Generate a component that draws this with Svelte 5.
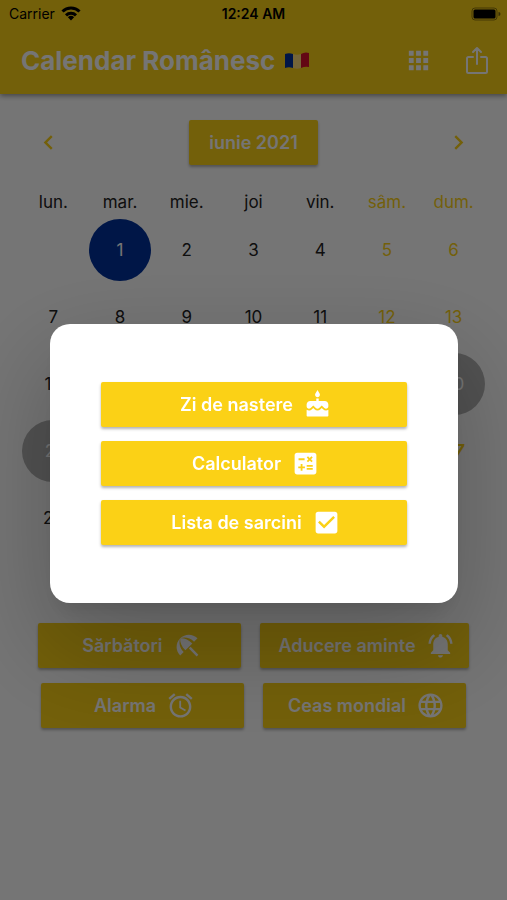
<script>
  const weekdays = ['lun.', 'mar.', 'mie.', 'joi', 'vin.', 'sâm.', 'dum.'];
  const days = [null, ...Array.from({ length: 30 }, (_, i) => i + 1)];
  const muted = [20, 21];

  const icons = {
    cake: 'M12 6c1.11 0 2-.9 2-2 0-.38-.1-.73-.29-1.03L12 0l-1.71 2.97c-.19.3-.29.65-.29 1.03 0 1.1.9 2 2 2zm4.6 9.99l-1.07-1.07-1.08 1.07c-1.3 1.3-3.58 1.31-4.89 0l-1.07-1.07-1.09 1.07C6.75 16.64 5.88 17 4.96 17c-.73 0-1.4-.23-1.96-.61V21c0 .55.45 1 1 1h16c.55 0 1-.45 1-1v-4.61c-.56.38-1.23.61-1.96.61-.92 0-1.79-.36-2.44-1.01zM18 9h-5V7h-2v2H6c-1.66 0-3 1.34-3 3v1.54c0 1.08.88 1.96 1.96 1.96.52 0 1.02-.2 1.38-.57l2.14-2.13 2.13 2.13c.74.74 2.03.74 2.77 0l2.14-2.13 2.13 2.13c.37.37.86.57 1.38.57 1.08 0 1.96-.88 1.96-1.96V12C21 10.34 19.66 9 18 9z',
    calculate: 'M19 3H5c-1.1 0-2 .9-2 2v14c0 1.1.9 2 2 2h14c1.1 0 2-.9 2-2V5c0-1.1-.9-2-2-2zm-5.97 4.06L14.09 6l1.41 1.41L16.91 6l1.06 1.06-1.41 1.41 1.41 1.41-1.06 1.06-1.41-1.4-1.41 1.41-1.06-1.06 1.41-1.41-1.41-1.42zm-6.78.66h5v1.5h-5v-1.5zM11.5 16h-2v2H8v-2H6v-1.5h2v-2h1.5v2h2V16zm6.5 1.25h-5v-1.5h5v1.5zm0-2.5h-5v-1.5h5v1.5z',
    check: 'M19 3H5c-1.11 0-2 .9-2 2v14c0 1.1.89 2 2 2h14c1.11 0 2-.9 2-2V5c0-1.1-.89-2-2-2zm-9 14l-5-5 1.41-1.41L10 14.17l7.59-7.59L19 8l-9 9z',
    umbrella: 'M13.127 14.56l1.43-1.43 6.44 6.443L19.57 21zm4.293-5.73l2.86-2.86c-3.95-3.95-10.35-3.96-14.3-.02 3.93-1.3 8.31-.25 11.44 2.88zM5.95 5.98c-3.94 3.95-3.93 10.35.02 14.3l2.86-2.86C5.7 14.29 4.65 9.91 5.95 5.98zm.02-.02l-.01.01c-.38 3.01 1.17 6.88 4.3 10.02l5.73-5.73c-3.13-3.13-7.01-4.68-10.02-4.3z',
    bell: 'M7.58 4.08L6.15 2.65C3.75 4.48 2.17 7.3 2.03 10.5h2c.15-2.65 1.51-4.97 3.55-6.42zm12.39 6.42h2c-.15-3.2-1.73-6.02-4.12-7.85l-1.42 1.43c2.02 1.45 3.39 3.77 3.54 6.42zM18 11c0-3.07-1.64-5.64-4.5-6.32V4c0-.83-.67-1.5-1.5-1.5s-1.5.67-1.5 1.5v.68C7.63 5.36 6 7.92 6 11v5l-2 2v1h16v-1l-2-2v-5zm-6 11c.14 0 .27-.01.4-.04.65-.14 1.18-.58 1.44-1.18.1-.24.15-.5.15-.78h-4c.01 1.1.9 2 2.01 2z',
    alarm: 'M22 5.72l-4.6-3.86-1.29 1.53 4.6 3.86L22 5.72zM7.88 3.39L6.6 1.86 2 5.71l1.29 1.53 4.59-3.85zM12.5 8H11v6l4.75 2.85.75-1.23-4-2.37V8zM12 4c-4.97 0-9 4.03-9 9s4.02 9 9 9c4.97 0 9-4.03 9-9s-4.03-9-9-9zm0 16c-3.87 0-7-3.13-7-7s3.13-7 7-7 7 3.13 7 7-3.13 7-7 7z',
    globe: 'M11.99 2C6.47 2 2 6.48 2 12s4.47 10 9.99 10C17.52 22 22 17.52 22 12S17.52 2 11.99 2zm6.93 6h-2.95c-.32-1.25-.78-2.45-1.38-3.56 1.84.63 3.37 1.91 4.33 3.56zM12 4.04c.83 1.2 1.48 2.53 1.91 3.96h-3.82c.43-1.43 1.08-2.76 1.91-3.96zM4.26 14C4.1 13.36 4 12.69 4 12s.1-1.36.26-2h3.38c-.08.66-.14 1.32-.14 2s.06 1.34.14 2H4.26zm.82 2h2.95c.32 1.25.78 2.45 1.38 3.56-1.84-.63-3.37-1.9-4.33-3.56zm2.95-8H5.08c.96-1.66 2.49-2.93 4.33-3.56C8.81 5.55 8.35 6.75 8.03 8zM12 19.96c-.83-1.2-1.48-2.53-1.91-3.96h3.82c-.43 1.43-1.08 2.76-1.91 3.96zM14.34 14H9.66c-.09-.66-.16-1.32-.16-2s.07-1.35.16-2h4.68c.09.65.16 1.32.16 2s-.07 1.34-.16 2zm.25 5.56c.6-1.11 1.06-2.31 1.38-3.56h2.95c-.96 1.65-2.49 2.93-4.33 3.56zM16.36 14c.08-.66.14-1.32.14-2s-.06-1.34-.14-2h3.38c.16.64.26 1.31.26 2s-.1 1.36-.26 2h-3.38z',
    left: 'M15.41 7.41L14 6l-6 6 6 6 1.41-1.41L10.83 12z',
    right: 'M10 6L8.59 7.41 13.17 12l-4.58 4.59L10 18l6-6z',
    apps: 'M4 8h4V4H4v4zm6 12h4v-4h-4v4zm-6 0h4v-4H4v4zm0-6h4v-4H4v4zm6 0h4v-4h-4v4zm6-10v4h4V4h-4zm-6 4h4V4h-4v4zm6 6h4v-4h-4v4zm0 6h4v-4h-4v4z'
  };

  const tools = [
    [['Sărbători', 'umbrella'], ['Aducere aminte', 'bell']],
    [['Alarma', 'alarm'], ['Ceas mondial', 'globe']]
  ];
  const dialogActions = [['Zi de nastere', 'cake'], ['Calculator', 'calculate'], ['Lista de sarcini', 'check']];
</script>

{#snippet icon(name)}
  <svg class="icon" viewBox="0 0 24 24" aria-hidden="true"><path d={icons[name]} /></svg>
{/snippet}

<div class="page">
  <header>
    <div class="status">
      <span class="carrier">
        Carrier
        <svg width="20" height="15" viewBox="0 0 20 15" aria-hidden="true">
          <g fill="none" stroke="#000" stroke-width="3">
            <path d="M1.5 5.5a12 12 0 0 1 17 0" />
            <path d="M5 9.3a7.2 7.2 0 0 1 10 0" />
          </g>
          <path d="M6.9 11.2a4.5 4.5 0 0 1 6.2 0L10 14.6z" />
        </svg>
      </span>
      <span class="time">12:24 AM</span>
      <svg class="battery" width="30" height="14" viewBox="0 0 30 14" aria-hidden="true">
        <rect x="1" y="1" width="25" height="12" rx="3" fill="none" stroke="#000" stroke-opacity=".4" />
        <rect x="2.5" y="2.5" width="22" height="9" rx="1.5" />
        <path d="M27.5 5v4a2 2 0 0 0 0-4z" fill-opacity=".5" />
      </svg>
    </div>
    <div class="appbar">
      <h1>
        Calendar Românesc
        <svg width="24" height="18" viewBox="0 0 24 18" role="img" aria-label="România">
          <path fill="#00319c" d="M0 2q4-1.5 8 0v14q-4-1.5-8 0z" />
          <path fill="#ffde7a" d="M8 2q4 1.5 8 0v14q-4 1.5-8 0z" />
          <path fill="#d8102c" d="M16 2q4-2.5 8-1v14q-4-1-8 1z" />
        </svg>
      </h1>
      <button class="plain" aria-label="Aplicații">{@render icon('apps')}</button>
      <button class="plain share" aria-label="Distribuie">
        <svg width="24" height="30" viewBox="0 0 24 30" fill="none" stroke="#fff" stroke-width="2" stroke-linejoin="round" stroke-linecap="round" aria-hidden="true">
          <path d="M8 11H3.5Q2 11 2 12.5v13Q2 27 3.5 27h17q1.5 0 1.5-1.5v-13Q22 11 20.5 11H16M12 18V2M8 6l4-4 4 4" />
        </svg>
      </button>
    </div>
  </header>

  <main>
    <div class="month">
      <button class="plain" aria-label="Luna anterioară">{@render icon('left')}</button>
      <button class="action">iunie 2021</button>
      <button class="plain" aria-label="Luna următoare">{@render icon('right')}</button>
    </div>

    <div class="grid weekdays">
      {#each weekdays as name, i}
        <span class:weekend={i > 4}>{name}</span>
      {/each}
    </div>
    <div class="grid days">
      {#each days as day, i}
        <span
          class:weekend={i % 7 > 4}
          class:selected={day === 1}
          class:muted={muted.includes(day)}
          class:special={day === 27}>{day ?? ''}</span>
      {/each}
    </div>

    <div class="tools">
      {#each tools as row}
        <div class="tool-row">
          {#each row as [label, name]}
            <button class="action with-icon">{label}{@render icon(name)}</button>
          {/each}
        </div>
      {/each}
    </div>
  </main>
</div>

<div class="overlay">
  <div class="dialog" role="dialog" aria-modal="true" aria-label="Instrumente">
    {#each dialogActions as [label, name]}
      <button class="action with-icon">{label}{@render icon(name)}</button>
    {/each}
  </div>
</div>

<style>
  :global(body) {
    margin: 0;
  }
  .page,
  .overlay {
    font-family: Inter, 'Liberation Sans', sans-serif;
    box-sizing: border-box;
  }
  .page {
    min-height: 100vh;
    background: #fff;
    color: #000;
  }
  button {
    font: inherit;
    border: 0;
    cursor: pointer;
  }
  svg {
    display: block;
    flex: none;
  }
  .icon {
    width: 29px;
    height: 29px;
    fill: currentColor;
  }
  header {
    background: #fbd116;
    box-shadow: 0 2px 5px rgba(0, 0, 0, 0.4);
  }
  .status {
    display: grid;
    grid-template-columns: 1fr auto 1fr;
    align-items: center;
    height: 27px;
    padding: 0 6px;
    font-size: 14px;
  }
  .carrier {
    display: flex;
    align-items: center;
    gap: 6px;
    padding-left: 3px;
  }
  .time {
    font-weight: 600;
  }
  .battery {
    justify-self: end;
  }
  .appbar {
    display: flex;
    align-items: center;
    height: 67px;
    padding: 0 18px 0 21px;
    color: #fff;
  }
  h1 {
    display: flex;
    align-items: center;
    gap: 10px;
    flex: 1;
    margin: 0;
    font-size: 26px;
    font-weight: 700;
    white-space: nowrap;
  }
  .plain {
    display: flex;
    padding: 0;
    background: none;
    color: inherit;
  }
  .share {
    margin-left: 32px;
  }
  .action {
    display: flex;
    align-items: center;
    justify-content: center;
    gap: 10px;
    height: 45px;
    padding: 0 20px;
    border-radius: 2px;
    background: #fbd116;
    color: #fff;
    font-size: 18px;
    font-weight: 600;
    white-space: nowrap;
    box-shadow: 0 2px 3px rgba(0, 0, 0, 0.3);
  }
  .with-icon {
    padding: 0 14px 0 18px;
  }
  main {
    padding: 26px 20px;
  }
  .month {
    display: flex;
    align-items: center;
    justify-content: space-between;
    padding: 0 14px;
    color: #fbd116;
  }
  .grid {
    display: grid;
    grid-template-columns: repeat(7, 1fr);
    justify-items: center;
    font-size: 17px;
    color: #222;
  }
  .weekdays {
    margin-top: 26px;
    line-height: 22px;
  }
  .days {
    margin-top: 6px;
    row-gap: 5px;
  }
  .days span {
    width: 62px;
    line-height: 62px;
    border-radius: 50%;
    text-align: center;
  }
  .weekend {
    color: #fbd116;
  }
  .days .selected {
    background: #00319c;
    color: #fff;
  }
  .days .muted {
    background: #b3b3b3;
    color: #fff;
  }
  .days .special {
    font-weight: 700;
    font-style: italic;
  }
  .tools {
    display: grid;
    gap: 15px;
    margin-top: 74px;
  }
  .tool-row {
    display: flex;
    justify-content: center;
    gap: 19px;
  }
  .tool-row .action {
    min-width: 203px;
  }
  .overlay {
    position: fixed;
    inset: 0;
    display: flex;
    align-items: center;
    padding: 26px 49px 0 50px;
    background: rgba(0, 0, 0, 0.54);
  }
  .dialog {
    display: grid;
    gap: 14px;
    flex: 1;
    padding: 58px 51px;
    border-radius: 20px;
    background: #fff;
    box-shadow:
      0 14px 20px -8px rgba(0, 0, 0, 0.1),
      0 40px 100px 10px rgba(0, 0, 0, 0.22);
  }
</style>
